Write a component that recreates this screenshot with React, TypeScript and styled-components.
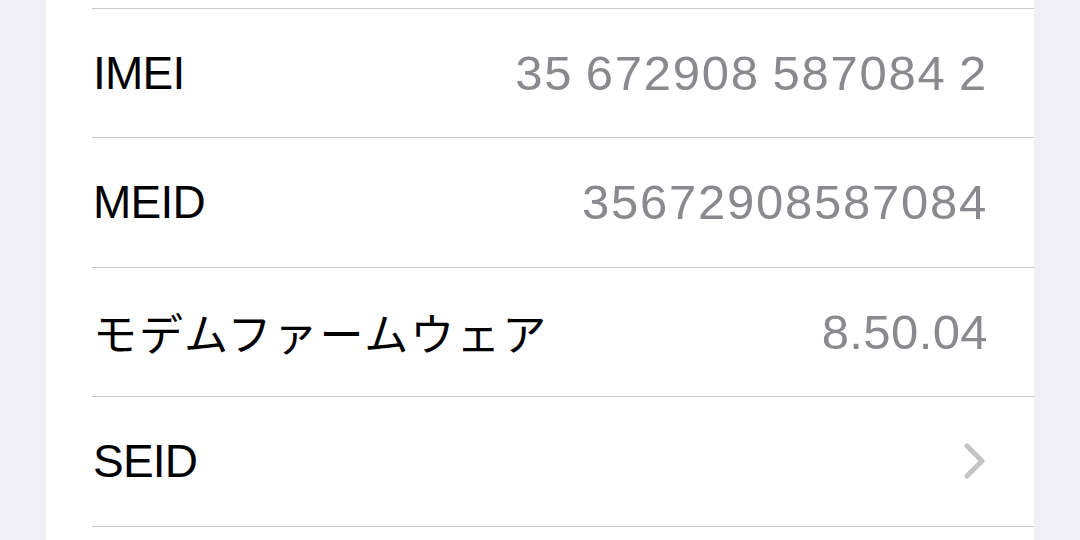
import React from "react";
import styled, { createGlobalStyle } from "styled-components";

const Global = createGlobalStyle`
  html, body { margin: 0; padding: 0; background: #f0eff5; }
  body { font-family: "Liberation Sans", "Noto Sans CJK JP", sans-serif; -webkit-font-smoothing: antialiased; }
`;

const Page = styled.div`
  width: 1080px;
  height: 540px;
  overflow: hidden;
  background: #f0eff5;
  padding: 0 46px;
  box-sizing: border-box;
`;

const Panel = styled.div`
  background: #ffffff;
  height: 100%;
  padding-top: 7.5px;
  padding-left: 46px;
  box-sizing: border-box;
`;

const Row = styled.div`
  display: flex;
  align-items: center;
  justify-content: space-between;
  height: 128.5px;
  border-top: 1px solid #c8c7cc;
  padding-right: 46px;
  padding-left: 1px;
`;

const Label = styled.span<{ $jp?: boolean }>`
  color: #000;
  font-size: ${(p) => (p.$jp ? "44px" : "46px")};
  font-family: ${(p) =>
    p.$jp ? `"Noto Sans CJK JP", sans-serif` : `"Liberation Sans", "Noto Sans CJK JP", sans-serif`};
  letter-spacing: ${(p) => (p.$jp ? "2px" : "-0.8px")};
`;

const Value = styled.span<{ $spacing?: number }>`
  color: #8a8a8e;
  font-size: 49px;
  letter-spacing: ${(p) => p.$spacing ?? 1.75}px;
  word-spacing: -2.8px;
  font-variant-numeric: tabular-nums;
`;

const Chevron = styled.svg`
  width: 24px;
  height: 36px;
  margin-right: 1px;
`;

const Bottom = styled.div`
  border-top: 1px solid #c8c7cc;
`;

export default function App() {
  return (
    <>
      <Global />
      <Page>
        <Panel>
          <Row>
            <Label>IMEI</Label>
            <Value>35 672908 587084 2</Value>
          </Row>
          <Row>
            <Label>MEID</Label>
            <Value>35672908587084</Value>
          </Row>
          <Row>
            <Label $jp>モデムファームウェア</Label>
            <Value $spacing={0.4}>8.50.04</Value>
          </Row>
          <Row>
            <Label>SEID</Label>
            <Chevron viewBox="0 0 24 36" fill="none">
              <path d="M4 3 L19 18 L4 33" stroke="#c4c4c7" strokeWidth="5" strokeLinecap="round" strokeLinejoin="round" />
            </Chevron>
          </Row>
          <Bottom />
        </Panel>
      </Page>
    </>
  );
}
